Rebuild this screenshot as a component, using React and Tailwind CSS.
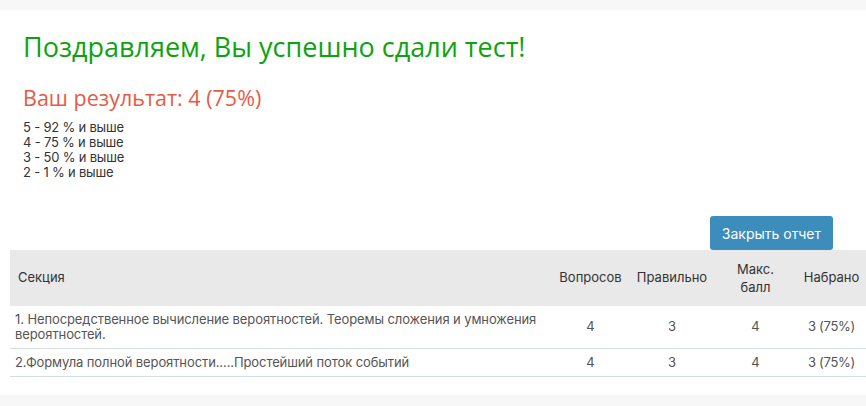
import React from 'react';

const ROWS = [
    { name: '1. Непосредственное вычисление вероятностей. Теоремы сложения и умножения вероятностей.', total: 4, right: 3, max: 4, got: '3 (75%)' },
    { name: '2.Формула полной вероятности.....Простейший поток событий', total: 4, right: 3, max: 4, got: '3 (75%)' }
];

const SCALE = ['5 - 92 % и выше', '4 - 75 % и выше', '3 - 50 % и выше', '2 - 1 % и выше'];

export default function App() {
    return (
        <div className="w-[866px] h-[406px] bg-[#f7f7f7] pt-[10px] overflow-hidden font-['Inter','Noto_Sans',sans-serif] text-[#333]">
            <div className="bg-white h-[385px] pl-[10px]">
                <div className="pl-[13px] pt-[17px]">
                    <h1 className="font-['Open_Sans',sans-serif] text-[27px] leading-[40px] text-[#0ea30e]">Поздравляем, Вы успешно сдали тест!</h1>
                    <h2 className="font-['Open_Sans',sans-serif] text-[21.5px] leading-[30px] text-[#e65b46] mt-[16px]">Ваш результат: 4 (75%)</h2>
                    <div className="mt-[7px] text-[13px] leading-[15px] tracking-[-0.2px]">
                        {SCALE.map(s => <div key={s}>{s}</div>)}
                    </div>
                </div>
                <div className="flex justify-end pr-[33px] mt-[36px]">
                    <button className="h-[34px] px-[12px] rounded-[3px] bg-[#3c8dbc] text-white text-[14px]">Закрыть отчет</button>
                </div>
                <table className="w-[856px] border-collapse text-[13px] table-fixed">
                    <thead>
                        <tr className="bg-[#e9e9e9] h-[56px]">
                            <th className="text-left font-normal pl-[8px] w-[541px]">Секция</th>
                            <th className="font-normal w-[79px]">Вопросов</th>
                            <th className="font-normal w-[84px]">Правильно</th>
                            <th className="font-normal w-[83px] leading-[18px]">Макс.<br />балл</th>
                            <th className="font-normal">Набрано</th>
                        </tr>
                    </thead>
                    <tbody className="text-[#555]">
                        {ROWS.map((r, i) => (
                            <tr key={i} className="border-b border-[#d3dfdd]">
                                <td className="text-left pl-[5px] pr-0 py-[6px] leading-[15px] tracking-[-0.1px]">{r.name}</td>
                                <td className="text-center">{r.total}</td>
                                <td className="text-center">{r.right}</td>
                                <td className="text-center">{r.max}</td>
                                <td className="text-center tracking-[-0.3px]">{r.got}</td>
                            </tr>
                        ))}
                    </tbody>
                </table>
            </div>
        </div>
    );
}
